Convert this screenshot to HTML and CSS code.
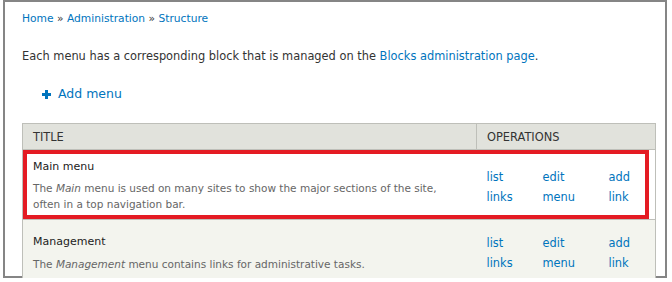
FILE: index.html
```html
<!DOCTYPE html>
<html lang="en">
<head>
    <meta charset="UTF-8">
    <title>Menus</title>
    <link rel="stylesheet" href="styles.css">
</head>
<body>
    <div class="frame">
        <div class="breadcrumb">
            <a href="#">Home</a> &raquo; <a href="#">Administration</a> &raquo; <a href="#">Structure</a>
        </div>

        <p class="help">Each menu has a corresponding block that is managed on the <a href="#">Blocks administration page</a>.</p>

        <ul class="action-links">
            <li>
                <a href="#">
                    <svg class="plus" width="9" height="9" viewBox="0 0 9 9"><rect x="3" y="0" width="3" height="9"/><rect x="0" y="3" width="9" height="3"/></svg>
                    Add menu
                </a>
            </li>
        </ul>

        <div class="table-wrap">
            <table class="menus">
                <colgroup>
                    <col class="c-title">
                    <col class="c-list">
                    <col class="c-edit">
                    <col class="c-add">
                </colgroup>
                <thead>
                    <tr>
                        <th>Title</th>
                        <th colspan="3">Operations</th>
                    </tr>
                </thead>
                <tbody>
                    <tr class="odd first">
                        <td>
                            <div class="name">Main menu</div>
                            <div class="desc">The <em>Main</em> menu is used on many sites to show the major sections of the site, often in a top navigation bar.</div>
                        </td>
                        <td class="op"><a href="#">list links</a></td>
                        <td class="op"><a href="#">edit menu</a></td>
                        <td class="op"><a href="#">add link</a></td>
                    </tr>
                    <tr class="even second">
                        <td>
                            <div class="name">Management</div>
                            <div class="desc">The <em>Management</em> menu contains links for administrative tasks.</div>
                        </td>
                        <td class="op"><a href="#">list links</a></td>
                        <td class="op"><a href="#">edit menu</a></td>
                        <td class="op"><a href="#">add link</a></td>
                    </tr>
                    <tr class="odd filler">
                        <td></td>
                        <td class="op"></td>
                        <td class="op"></td>
                        <td class="op"></td>
                    </tr>
                </tbody>
            </table>
            <!-- callout drawn over the first row -->
            <div class="highlight"></div>
        </div>
    </div>
</body>
</html>
```

FILE: styles.css
```css
body {
    margin: 0;
    font-family: "DejaVu Sans", Verdana, sans-serif;
    font-size: 11.4px;
    color: #333;
    overflow: hidden;
}
a {
    color: #0074bd;
    text-decoration: none;
}
.frame {
    margin-left: 3px;
    width: 664px;
    height: 278px;
    border: 2px solid #858585;
    padding: 0 0 0 17px;
    box-sizing: border-box;
}
.breadcrumb {
    padding-top: 10px;
    font-size: 10.7px;
    line-height: 14px;
}
.help {
    margin: 23px 0 0 0;
    line-height: 14px;
}
.action-links {
    list-style: none;
    margin: 23px 0 0 0;
    padding: 0 0 0 20px;
    font-size: 12.5px;
    line-height: 16px;
}
.plus {
    fill: #0074bd;
    margin-right: 3px;
    vertical-align: -0.5px;
}
.table-wrap {
    position: relative;
    margin-top: 21px;
    width: 634px;
}
.menus {
    width: 634px;
    border-collapse: collapse;
    border: 1px solid #bebfb9;
    table-layout: fixed;
}
.c-title {
    width: 454px;
}
.c-list {
    width: 56px;
}
.c-edit {
    width: 66px;
}
.menus th {
    background: #e1e2dc;
    text-align: left;
    font-weight: normal;
    text-transform: uppercase;
    color: #333;
    height: 25px;
    padding: 0 10px;
    border-bottom: 1px solid #bebfb9;
    border-left: 1px solid #bebfb9;
}
.menus td {
    padding: 9px 10px 7px 10px;
    vertical-align: middle;
    border-bottom: 1px solid #bebfb9;
}
.menus tr.second td {
    padding-top: 14px;
    padding-bottom: 6px;
}
.menus tr.first td.op {
    padding-top: 12px;
    padding-bottom: 7px;
}
.menus tr.second td.op {
    padding-top: 13px;
    padding-bottom: 5px;
}
.menus tr.filler td {
    height: 30px;
    padding: 0;
}
.menus tr.odd td {
    background: #fff;
}
.menus tr.even td {
    background: #f3f4ee;
}
.name {
    color: #222;
    font-size: 11px;
    line-height: 16px;
    margin-bottom: 5px;
}
.second .name {
    margin-bottom: 6px;
}
.desc {
    color: #666;
    font-size: 10.5px;
    line-height: 16px;
}
.op {
    line-height: 20px;
}
.highlight {
    position: absolute;
    top: 27px;
    left: 1px;
    width: 626px;
    height: 69px;
    border: 4px solid #e41b23;
    box-sizing: border-box;
}
```
